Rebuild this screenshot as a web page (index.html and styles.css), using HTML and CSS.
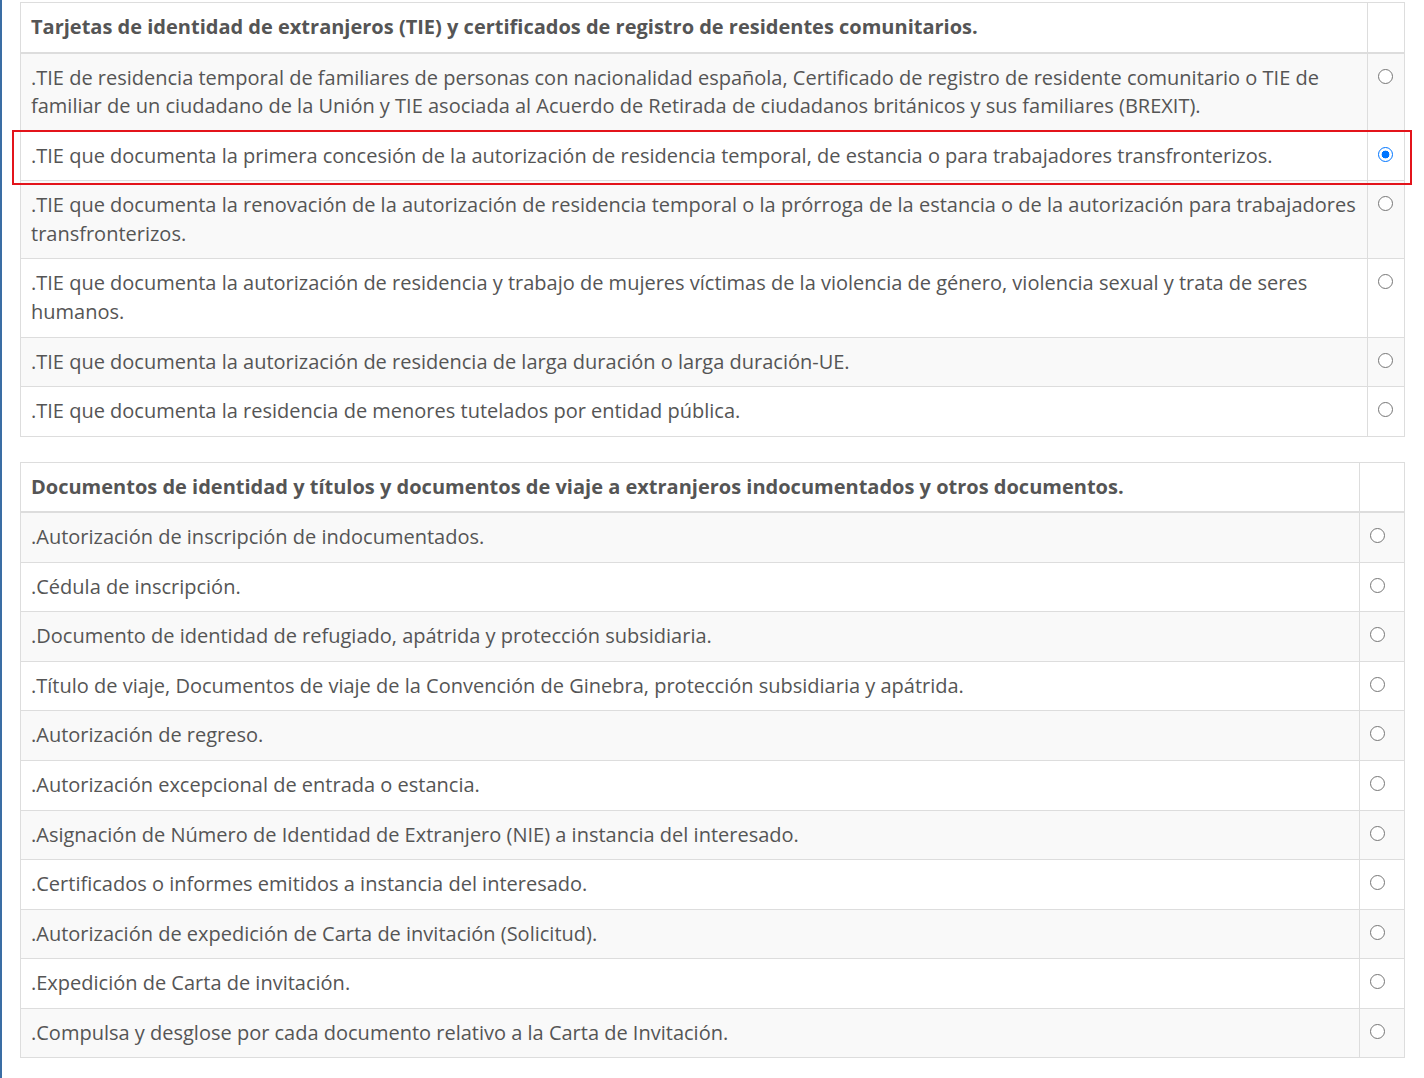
FILE: index.html
```html
<!DOCTYPE html>
<html lang="es">
<head>
  <meta charset="UTF-8">
  <title>Selección de trámite</title>
  <link rel="stylesheet" href="styles.css">
</head>
<body>
  <div class="page">
    <div class="tabla-wrap">
      <table class="tabla tabla-tie">
        <thead>
          <tr>
            <th>Tarjetas de identidad de extranjeros (TIE) y certificados de registro de residentes comunitarios.</th>
            <th class="col-radio"></th>
          </tr>
        </thead>
        <tbody>
          <tr>
            <td>.TIE de residencia temporal de familiares de personas con nacionalidad española, Certificado de registro de residente comunitario o TIE de familiar de un ciudadano de la Unión y TIE asociada al Acuerdo de Retirada de ciudadanos británicos y sus familiares (BREXIT).</td>
            <td><input type="radio" name="tramite" value="1"></td>
          </tr>
          <tr>
            <td>.TIE que documenta la primera concesión de la autorización de residencia temporal, de estancia o para trabajadores transfronterizos.</td>
            <td><input type="radio" name="tramite" value="2" checked></td>
          </tr>
          <tr>
            <td>.TIE que documenta la renovación de la autorización de residencia temporal o la prórroga de la estancia o de la autorización para trabajadores transfronterizos.</td>
            <td><input type="radio" name="tramite" value="3"></td>
          </tr>
          <tr>
            <td>.TIE que documenta la autorización de residencia y trabajo de mujeres víctimas de la violencia de género, violencia sexual y trata de seres humanos.</td>
            <td><input type="radio" name="tramite" value="4"></td>
          </tr>
          <tr>
            <td>.TIE que documenta la autorización de residencia de larga duración o larga duración-UE.</td>
            <td><input type="radio" name="tramite" value="5"></td>
          </tr>
          <tr>
            <td>.TIE que documenta la residencia de menores tutelados por entidad pública.</td>
            <td><input type="radio" name="tramite" value="6"></td>
          </tr>
        </tbody>
      </table>
      <div class="seleccion"></div>
    </div>

    <table class="tabla tabla-docs">
      <thead>
        <tr>
          <th>Documentos de identidad y títulos y documentos de viaje a extranjeros indocumentados y otros documentos.</th>
          <th class="col-radio"></th>
        </tr>
      </thead>
      <tbody>
        <tr>
          <td>.Autorización de inscripción de indocumentados.</td>
          <td><input type="radio" name="tramite" value="7"></td>
        </tr>
        <tr>
          <td>.Cédula de inscripción.</td>
          <td><input type="radio" name="tramite" value="8"></td>
        </tr>
        <tr>
          <td>.Documento de identidad de refugiado, apátrida y protección subsidiaria.</td>
          <td><input type="radio" name="tramite" value="9"></td>
        </tr>
        <tr>
          <td>.Título de viaje, Documentos de viaje de la Convención de Ginebra, protección subsidiaria y apátrida.</td>
          <td><input type="radio" name="tramite" value="10"></td>
        </tr>
        <tr>
          <td>.Autorización de regreso.</td>
          <td><input type="radio" name="tramite" value="11"></td>
        </tr>
        <tr>
          <td>.Autorización excepcional de entrada o estancia.</td>
          <td><input type="radio" name="tramite" value="12"></td>
        </tr>
        <tr>
          <td>.Asignación de Número de Identidad de Extranjero (NIE) a instancia del interesado.</td>
          <td><input type="radio" name="tramite" value="13"></td>
        </tr>
        <tr>
          <td>.Certificados o informes emitidos a instancia del interesado.</td>
          <td><input type="radio" name="tramite" value="14"></td>
        </tr>
        <tr>
          <td>.Autorización de expedición de Carta de invitación (Solicitud).</td>
          <td><input type="radio" name="tramite" value="15"></td>
        </tr>
        <tr>
          <td>.Expedición de Carta de invitación.</td>
          <td><input type="radio" name="tramite" value="16"></td>
        </tr>
        <tr>
          <td>.Compulsa y desglose por cada documento relativo a la Carta de Invitación.</td>
          <td><input type="radio" name="tramite" value="17"></td>
        </tr>
      </tbody>
    </table>
  </div>
</body>
</html>
```

FILE: styles.css
```css
body {
  margin: 0;
  font-family: "Open Sans", sans-serif;
  font-size: 20px;
  line-height: 1.42857;
  color: #555;
  background: #fff;
}

.page {
  border-left: 2px solid #3a6da4;
  padding: 2px 19px 0 18px;
  min-height: 1076px;
}

.tabla-wrap {
  position: relative;
  margin-bottom: 25px;
}

.tabla {
  width: 100%;
  border-collapse: collapse;
  border: 1px solid #ddd;
}

.tabla th,
.tabla td {
  border: 1px solid #ddd;
  padding: 10px;
  text-align: left;
  vertical-align: top;
}

.tabla th {
  font-weight: 700;
  border-bottom: 2px solid #ddd;
}

.tabla tbody tr:nth-child(odd) {
  background-color: #f9f9f9;
}

.tabla-tie .col-radio {
  width: 16px;
}

.tabla-docs .col-radio {
  width: 24px;
}

.tabla input[type="radio"] {
  appearance: none;
  -webkit-appearance: none;
  display: block;
  box-sizing: border-box;
  margin: 5px 0 0 0;
  width: 15px;
  height: 15px;
  border: 1.5px solid #767676;
  border-radius: 50%;
  background: #fff;
}

.tabla input[type="radio"]:checked {
  border-color: #0075ff;
  background: radial-gradient(circle, #0075ff 0 3.6px, #fff 4.2px);
}

.seleccion {
  position: absolute;
  left: -8px;
  right: -7px;
  top: 128px;
  height: 51px;
  border: 2px solid #e3141b;
}
```
